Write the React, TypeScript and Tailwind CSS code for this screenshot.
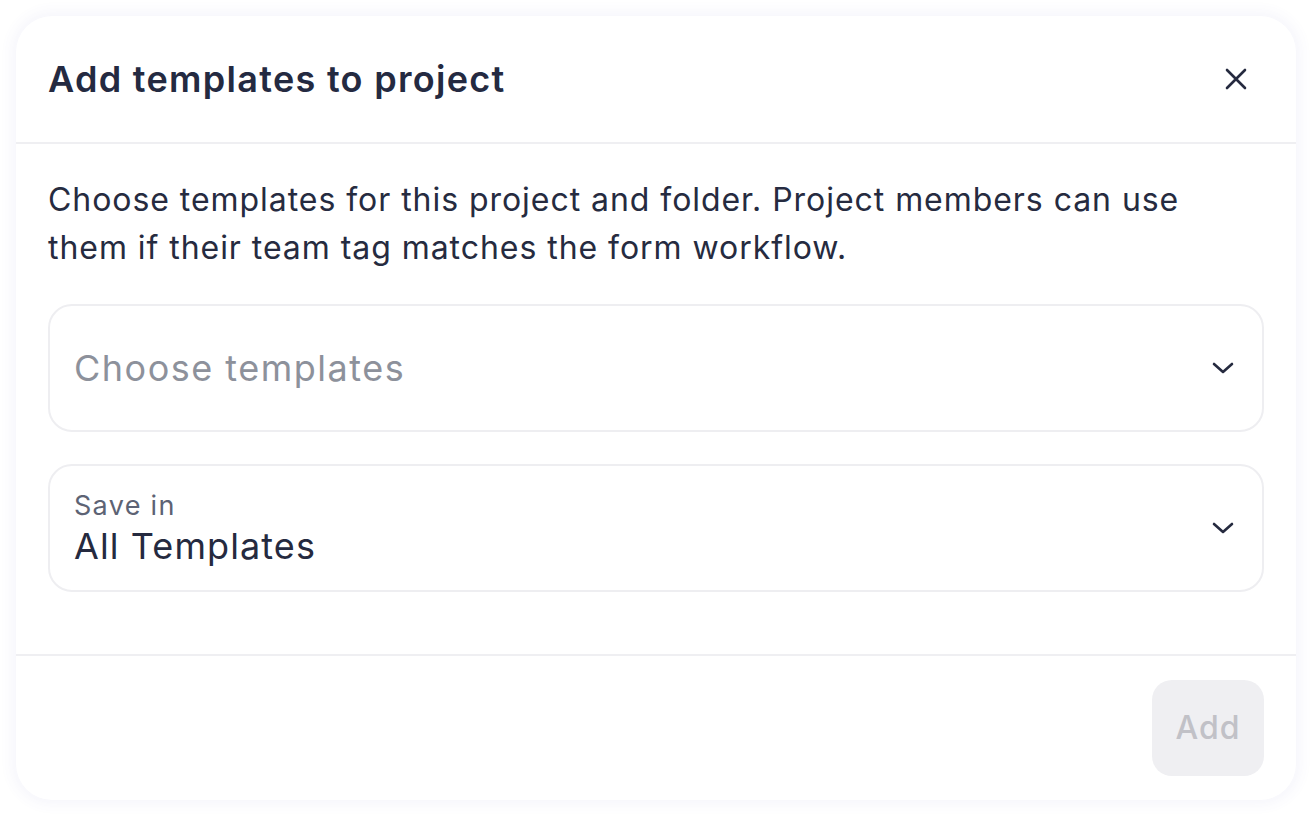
import React from "react";

function Chevron() {
  return (
    <svg width="24" height="14" viewBox="0 0 24 14" fill="none" className="shrink-0">
      <path d="M3 3l9 8 9-8" stroke="#252a3f" strokeWidth="2.6" strokeLinecap="round" strokeLinejoin="round" />
    </svg>
  );
}

export default function App() {
  const font = { fontFamily: "Inter, 'Noto Sans', sans-serif" };
  return (
    <div className="w-full h-[816px] bg-white p-4" style={font}>
      <div className="w-full h-full bg-white rounded-[36px] shadow-[0_0_14px_4px_rgba(90,90,190,0.06)] flex flex-col">
        <div className="h-[128px] shrink-0 flex items-center justify-between pl-8 pr-[49px] border-b-2 border-[#efeff2]">
          <h1 className="text-[36px] font-semibold text-[#242a41] tracking-[1.3px]">Add templates to project</h1>
          <svg width="22" height="22" viewBox="0 0 22 22" fill="none">
            <path d="M2 2l18 18M20 2L2 20" stroke="#252a3f" strokeWidth="2.6" strokeLinecap="round" />
          </svg>
        </div>
        <div className="px-8 pt-8 pb-[62px] flex flex-col gap-8">
          <p className="text-[32px] leading-[48px] text-[#262b40] tracking-[0.95px]">
            Choose templates for this project and folder. Project members can use them if their team tag matches the form workflow.
          </p>
          <div className="h-[128px] rounded-[24px] border-2 border-[#eeeef1] flex items-center justify-between pl-6 pr-[27px]">
            <span className="text-[36px] text-[#8d919b] tracking-[1.5px]">Choose templates</span>
            <Chevron />
          </div>
          <div className="h-[128px] rounded-[24px] border-2 border-[#eeeef1] flex items-center justify-between pl-6 pr-[27px]">
            <div className="flex flex-col">
              <span className="text-[27px] leading-[36px] text-[#5d6374] tracking-[1.3px]">Save in</span>
              <span className="text-[36px] leading-[44px] text-[#252a3f] tracking-[1.1px]">All Templates</span>
            </div>
            <Chevron />
          </div>
        </div>
        <div className="border-t-2 border-[#efeff2] flex justify-end px-8 pt-6">
          <button className="w-[112px] h-[96px] rounded-[20px] bg-[#efeff2] text-[32px] font-medium text-[#c1c1c7] tracking-[1px]">Add</button>
        </div>
      </div>
    </div>
  );
}
